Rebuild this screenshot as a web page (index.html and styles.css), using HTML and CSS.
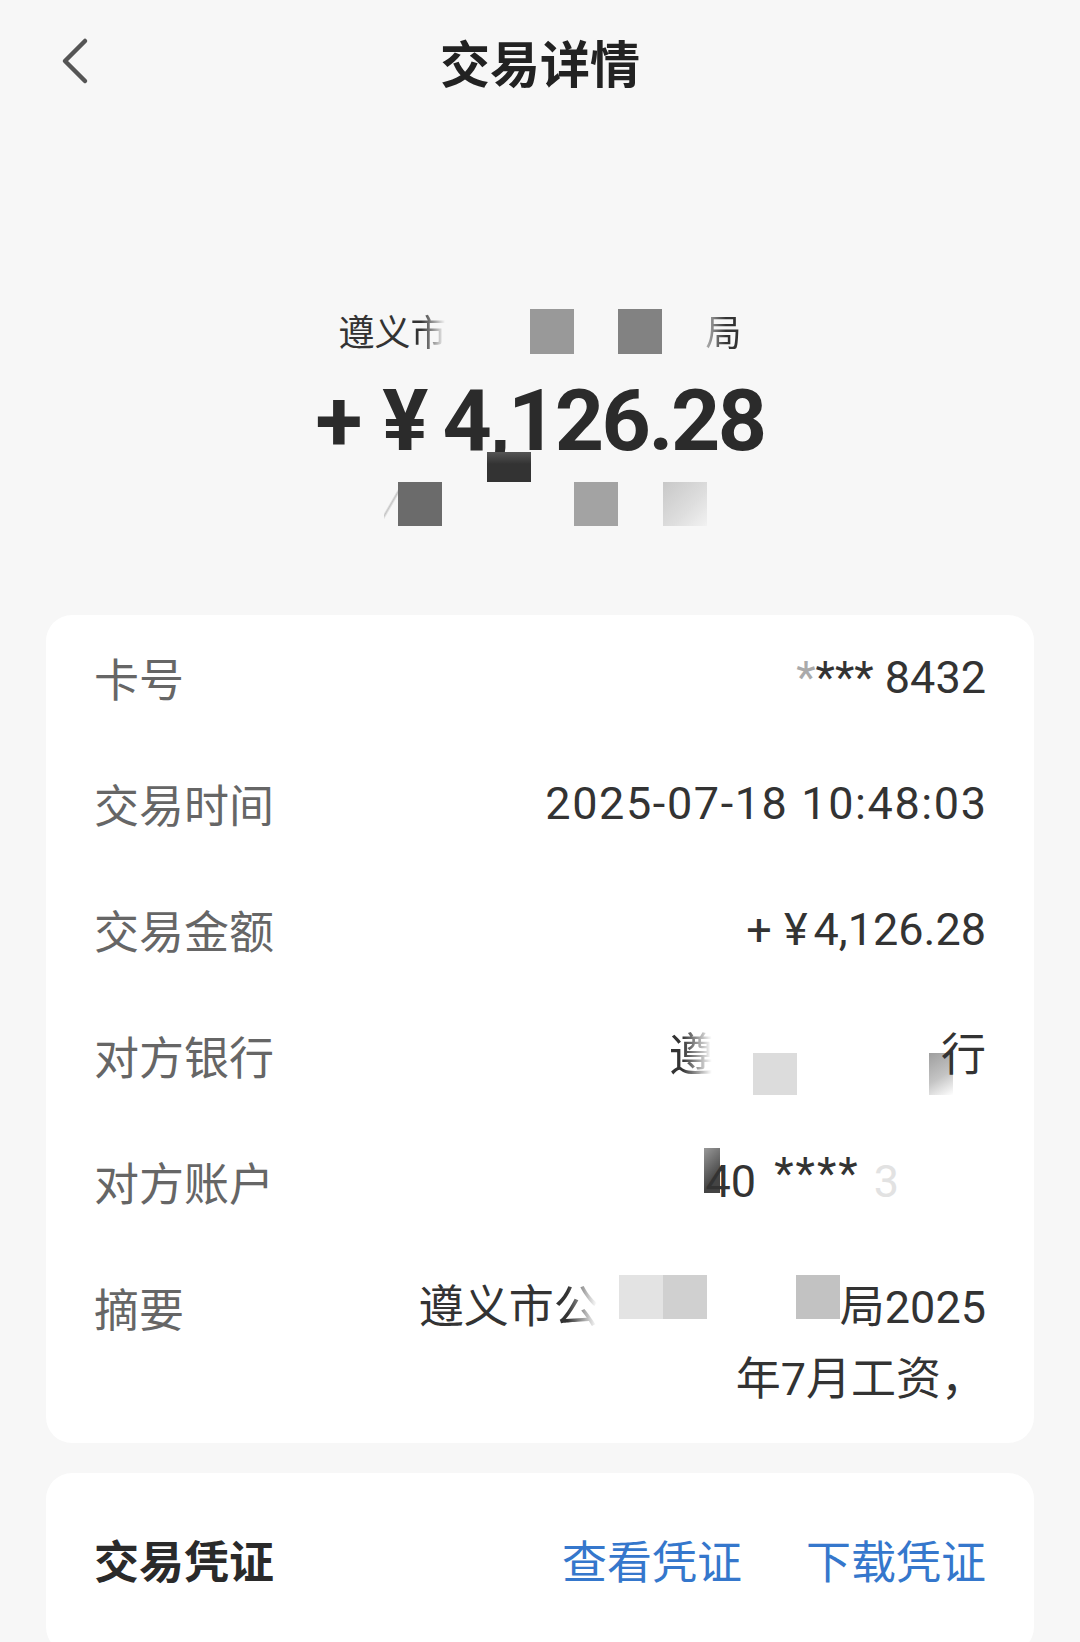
FILE: index.html
```html
<!DOCTYPE html>
<html lang="zh-CN">
<head>
<meta charset="utf-8">
<title>交易详情</title>
<link rel="stylesheet" href="styles.css">
</head>
<body>
<div class="page">
  <header class="topbar">
    <div class="back">
      <svg width="30" height="48" viewBox="0 0 30 48" aria-hidden="true"><path d="M25 4 L5 24 L25 44" fill="none" stroke="#555" stroke-width="4.5" stroke-linecap="round" stroke-linejoin="round"/></svg>
    </div>
    <h1 class="title">交易详情</h1>
    <div class="spacer"></div>
  </header>

  <section class="hero">
    <div class="payer">
      <span class="payer-text">遵义<span class="fade-r">市</span></span>
      <span class="gap83"></span>
      <span class="mz mz-36 g99"></span>
      <span class="gap44"></span>
      <span class="mz mz-36 g80"></span>
      <span class="gap44"></span>
      <span class="payer-text fade-l">局</span>
    </div>
    <div class="amount">
      <span class="amt-sign">+</span><span class="amt-cur">¥</span><span class="amt-num">4,126.28</span>
      <span class="mz-comma"></span>
    </div>
    <div class="mosaic-row">
      <span class="ghost"></span>
      <span class="mz g6b"></span>
      <span class="gap132"></span>
      <span class="mz ga3"></span>
      <span class="gap45"></span>
      <span class="mz grad-light"></span>
    </div>
  </section>

  <section class="card details">
    <div class="row">
      <span class="label">卡号</span>
      <span class="value"><span class="dim">*</span>*** 8432</span>
    </div>
    <div class="row">
      <span class="label">交易时间</span>
      <span class="value date">2025-07-18 10:48:03</span>
    </div>
    <div class="row">
      <span class="label">交易金额</span>
      <span class="value"><span class="sign">+</span><span class="cur">¥</span>4,126.28</span>
    </div>
    <div class="row">
      <span class="label">对方银行</span>
      <span class="value masked">
        <span class="fade-r">遵</span>
        <span class="gap39"></span>
        <span class="mz mz-low gdc"></span>
        <span class="gap132"></span>
        <span class="mz mz-low mz-narrow grad-dark"></span>
        <span>行</span>
      </span>
    </div>
    <div class="row">
      <span class="label">对方账户</span>
      <span class="value masked">
        <span class="acct-lead"><span class="mz-dark"></span>40</span>
        <span class="stars">****</span>
        <span class="ghost-digit">3</span>
        <span class="gap87"></span>
      </span>
    </div>
    <div class="row summary">
      <span class="label">摘要</span>
      <span class="value multi">
        <span class="line masked">
          <span>遵义市</span><span class="fade-r">公</span>
          <span class="gap20"></span>
          <span class="mz mz-high ge3"></span><span class="mz mz-high gd2"></span>
          <span class="gap89"></span>
          <span class="mz mz-high gc0"></span>
          <span>局2025</span>
        </span>
        <span class="line">年7月工资，</span>
      </span>
    </div>
  </section>

  <section class="card voucher">
    <div class="row">
      <span class="label strong">交易凭证</span>
      <span class="links">
        <a class="link" href="#">查看凭证</a>
        <a class="link" href="#">下载凭证</a>
      </span>
    </div>
  </section>
</div>
</body>
</html>
```

FILE: styles.css
```css
* { box-sizing: border-box; }
html, body {
  margin: 0;
  padding: 0;
  background: #f7f7f7;
}
body {
  font-family: "Roboto", "Noto Sans CJK SC", sans-serif;
  color: #333;
  width: 1080px;
  height: 1642px;
  overflow: hidden;
}
.page { width: 1080px; }

/* top bar */
.topbar {
  height: 124px;
  display: grid;
  grid-template-columns: 1fr auto 1fr;
  align-items: center;
}
.back {
  padding-left: 60px;
  display: flex;
  align-items: center;
  height: 48px;
  margin-top: -2px;
}
.title {
  margin: 0;
  font-family: "Noto Sans CJK SC", sans-serif;
  font-size: 50px;
  font-weight: 700;
  color: #222;
  line-height: 60px;
  margin-top: -2px;
}

/* hero */
.hero {
  padding-top: 184px;
}
.payer {
  display: flex;
  justify-content: center;
  align-items: center;
  height: 44px;
  font-family: "Noto Sans CJK SC", sans-serif;
  font-size: 36px;
  color: #333;
  line-height: 44px;
}
.fade-r {
  -webkit-mask-image: linear-gradient(90deg, #000 30%, transparent 95%);
  mask-image: linear-gradient(90deg, #000 30%, transparent 95%);
}
.fade-l {
  -webkit-mask-image: linear-gradient(90deg, rgba(0,0,0,0.35) 0%, #000 55%);
  mask-image: linear-gradient(90deg, rgba(0,0,0,0.35) 0%, #000 55%);
}
.mz {
  display: inline-block;
  width: 44px;
  height: 44px;
  flex: none;
}
.mz-36 { height: 45px; margin-top: 2px; }
.g99 { background: #999; }
.g80 { background: #828282; }
.g6b { background: #6b6b6b; }
.ga3 { background: #a3a3a3; }
.gdc { background: #dcdcdc; }
.ge3 { background: #e3e3e3; }
.gd2 { background: #d0d0d0; }
.gc0 { background: #c2c2c2; }
.grad-light { background: linear-gradient(135deg, #c8c8c8 0%, #dedede 60%, #f2f2f2 100%); }
.grad-dark { background: linear-gradient(150deg, #9e9e9e 0%, #c4c4c4 55%, rgba(255,255,255,0) 100%); }

.gap20 { display: inline-block; width: 20px; flex: none; }
.gap39 { display: inline-block; width: 39px; flex: none; }
.gap44 { display: inline-block; width: 44px; flex: none; }
.gap45 { display: inline-block; width: 45px; flex: none; }
.gap83 { display: inline-block; width: 83px; flex: none; }
.gap87 { display: inline-block; width: 87px; flex: none; }
.gap89 { display: inline-block; width: 89px; flex: none; }
.gap132 { display: inline-block; width: 132px; flex: none; }

.amount {
  position: relative;
  margin-top: 24px;
  height: 90px;
  display: flex;
  justify-content: center;
  align-items: center;
  font-family: "Roboto", "Noto Sans CJK SC", sans-serif;
  font-weight: 700;
  font-size: 86px;
  color: #2b2b2b;
  line-height: 90px;
}
.amt-sign { margin-right: 20px; }
.amt-cur { margin-right: 14px; }
.amt-num { letter-spacing: -2.5px; }
.mz-comma {
  position: absolute;
  left: 487px;
  top: 76px;
  width: 44px;
  height: 30px;
  background: linear-gradient(180deg, #555 0%, #333 40%, #333 100%);
}
.mosaic-row {
  margin-top: 16px;
  height: 44px;
  display: flex;
  align-items: center;
  padding-left: 384px;
}
.ghost {
  width: 14px;
  height: 44px;
  flex: none;
  background: linear-gradient(120deg, transparent 45%, #c4c4c4 50%, transparent 56%);
}

/* cards */
.card {
  margin: 89px 46px 0;
  background: #fff;
  border-radius: 26px;
  padding: 0 48px;
}
.row {
  display: flex;
  justify-content: space-between;
  align-items: flex-start;
  padding: 27px 0;
  font-size: 45px;
  line-height: 72px;
}
.label {
  font-family: "Noto Sans CJK SC", sans-serif;
  color: #666;
  flex: none;
}
.value {
  color: #333;
  text-align: right;
  white-space: nowrap;
}
.date { letter-spacing: 1.6px; margin-right: -1.6px; }
.dim { color: #aaa; }
.sign { margin-right: 12px; }
.cur { margin-right: 6px; }
.masked {
  display: flex;
  align-items: center;
  justify-content: flex-end;
  height: 72px;
}
.mz-low { margin-top: 36px; height: 42px; }
.mz-narrow { width: 24px; margin-right: -12px; }
.mz-high { margin-top: -22px; }
.acct-lead {
  position: relative;
  display: inline-block;
  z-index: 1;
}
.mz-dark {
  position: absolute;
  left: -2px;
  top: 2px;
  width: 16px;
  height: 45px;
  background: linear-gradient(135deg, #999 0%, #444 70%);
  z-index: -1;
}
.stars {
  margin-left: 18px;
  letter-spacing: 2px;
  position: relative;
  top: -8px;
}
.ghost-digit {
  margin-left: 14px;
  color: #e2e2e2;
}
.multi {
  display: flex;
  flex-direction: column;
  align-items: flex-end;
}
.line { display: flex; align-items: center; height: 72px; }

.voucher {
  margin-top: 30px;
  height: 180px;
}
.voucher .row {
  padding-top: 51px;
}
.strong {
  color: #2a2a2a;
  font-weight: 700;
}
.links {
  display: flex;
  gap: 64px;
}
.link {
  font-family: "Noto Sans CJK SC", sans-serif;
  color: #3577cc;
  text-decoration: none;
}
```
